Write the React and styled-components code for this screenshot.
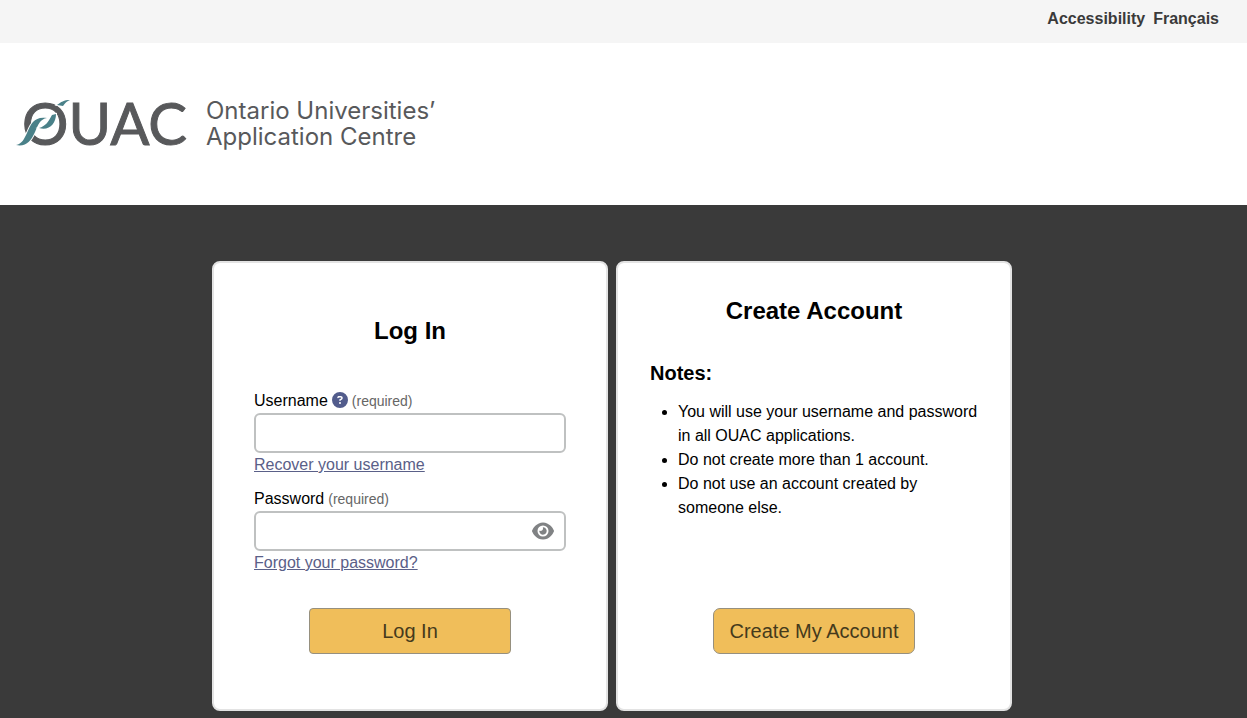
import React, { useState } from "react"
import styled, { createGlobalStyle } from "styled-components"
import { FaCircleQuestion, FaEye } from "react-icons/fa6"

const GlobalStyle = createGlobalStyle`
  * {
    box-sizing: border-box;
  }

  body {
    margin: 0;
    background: #3a3a3a;
    color: #000;
    font-family: "Liberation Sans", Arial, sans-serif;
    font-size: 16px;
    line-height: 24px;
  }
`

const TopBar = styled.nav`
  display: flex;
  justify-content: flex-end;
  gap: 8px;
  padding: 7px 28px 12px;
  background: #f5f5f5;
`

const TopLink = styled.a`
  color: #3a3a3a;
  font-weight: bold;
  text-decoration: none;
`

const Header = styled.header`
  display: flex;
  align-items: center;
  gap: 16px;
  padding: 45px 14px;
  background: #fff;
`

const Logo = styled.svg`
  display: block;
  width: 176px;
  height: 72px;
`

const LogoText = styled.text`
  font-family: Lato, sans-serif;
  font-size: 58px;
  fill: #58595b;
  stroke: #58595b;
  stroke-width: 1px;
`

const Tagline = styled.p`
  margin: 0;
  color: #58595b;
  font-family: Inter, sans-serif;
  font-size: 24px;
  line-height: 26px;
`

const Main = styled.main`
  display: flex;
  flex-wrap: wrap;
  justify-content: center;
  gap: 8px;
  padding: 56px 23px 7px 0;
  background: #3a3a3a;
`

const Card = styled.section`
  display: flex;
  flex-direction: column;
  flex: 0 1 396px;
  min-height: 450px;
  padding: ${(props) => props.$padding};
  border: 2px solid #e3e3e3;
  border-radius: 8px;
  background: #fff;
`

const Title = styled.h1`
  margin: 0;
  font-size: 24px;
  line-height: 32px;
  text-align: center;
`

const Form = styled.form`
  display: flex;
  flex-direction: column;
  flex: 1;
  margin-top: 42px;
`

const Field = styled.div`
  margin-bottom: 10px;
`

const LabelRow = styled.div`
  display: flex;
  align-items: center;
  gap: 4px;
`

const Required = styled.span`
  color: #666;
  font-size: 14px;
`

const HelpButton = styled.button`
  display: flex;
  padding: 0 0 2px;
  border: 0;
  background: none;
  color: #525c8c;
  font-size: 16px;
`

const InputWrap = styled.div`
  display: flex;
  align-items: center;
  height: 40px;
  border: 2px solid #bfc1c1;
  border-radius: 6px;
`

const Input = styled.input`
  flex: 1;
  min-width: 0;
  height: 100%;
  padding: 0 10px;
  border: 0;
  outline: 0;
  background: none;
  font: inherit;
`

const EyeButton = styled.button`
  display: flex;
  padding: 0 10px 0 0;
  border: 0;
  background: none;
  color: #808284;
  font-size: 22px;
`

const TextLink = styled.a`
  color: #5a6088;
`

const Button = styled.button`
  align-self: center;
  width: 202px;
  height: 46px;
  margin-top: auto;
  padding: 0;
  border: 1px solid #96907f;
  border-radius: ${(props) => props.$radius};
  background: #f0be5a;
  color: #453a1c;
  font-family: inherit;
  font-size: 20px;
`

const NotesTitle = styled.h2`
  margin: 34px 0 0;
  font-size: 20px;
  line-height: 24px;
`

const Notes = styled.ul`
  margin: 15px 0 0;
  padding-left: 28px;
`

const notes = [
  "You will use your username and password in all OUAC applications.",
  "Do not create more than 1 account.",
  "Do not use an account created by someone else.",
]

const OuacLogo = () => (
  <Logo viewBox="0 0 176 72" role="img" aria-label="OUAC">
    <LogoText x="8" y="57">
      OUAC
    </LogoText>
    <g fill="#4a8189" stroke="#fff" strokeWidth="2" paintOrder="stroke">
      <path d="M2 57 C8 56 10 51 13 45 C17 35 21 28 33 30 C26 31 24 37 21 44 C17 53 12 59 2 57Z" />
      <path d="M25 40 C32 38 34 34 38 27 L42 26 C42 36 35 43 25 40Z" />
      <path d="M56 12 C50 12 47 14 43 17 L49 18 C51 15 53 13 56 12Z" />
    </g>
  </Logo>
)

const LoginCard = () => {
  const [visible, setVisible] = useState(false)

  return (
    <Card $padding="52px 40px 55px">
      <Title>Log In</Title>
      <Form onSubmit={(e) => e.preventDefault()}>
        <Field>
          <LabelRow>
            <label htmlFor="username">Username</label>
            <HelpButton type="button" aria-label="Username help">
              <FaCircleQuestion />
            </HelpButton>
            <Required>(required)</Required>
          </LabelRow>
          <InputWrap>
            <Input id="username" type="text" />
          </InputWrap>
          <TextLink href="#recover">Recover your username</TextLink>
        </Field>
        <Field>
          <LabelRow>
            <label htmlFor="password">Password</label>
            <Required>(required)</Required>
          </LabelRow>
          <InputWrap>
            <Input id="password" type={visible ? "text" : "password"} />
            <EyeButton
              type="button"
              aria-label="Show password"
              onClick={() => setVisible(!visible)}
            >
              <FaEye />
            </EyeButton>
          </InputWrap>
          <TextLink href="#forgot">Forgot your password?</TextLink>
        </Field>
        <Button type="submit" $radius="4px">
          Log In
        </Button>
      </Form>
    </Card>
  )
}

const CreateCard = () => (
  <Card $padding="32px 32px 55px">
    <Title>Create Account</Title>
    <NotesTitle>Notes:</NotesTitle>
    <Notes>
      {notes.map((note) => (
        <li key={note}>{note}</li>
      ))}
    </Notes>
    <Button type="button" $radius="7px">
      Create My Account
    </Button>
  </Card>
)

const App = () => {
  return (
    <>
      <GlobalStyle />
      <TopBar>
        <TopLink href="#accessibility">Accessibility</TopLink>
        <TopLink href="#fr">Français</TopLink>
      </TopBar>
      <Header>
        <OuacLogo />
        <Tagline>
          Ontario Universities’
          <br />
          Application Centre
        </Tagline>
      </Header>
      <Main>
        <LoginCard />
        <CreateCard />
      </Main>
    </>
  )
}

export default App
